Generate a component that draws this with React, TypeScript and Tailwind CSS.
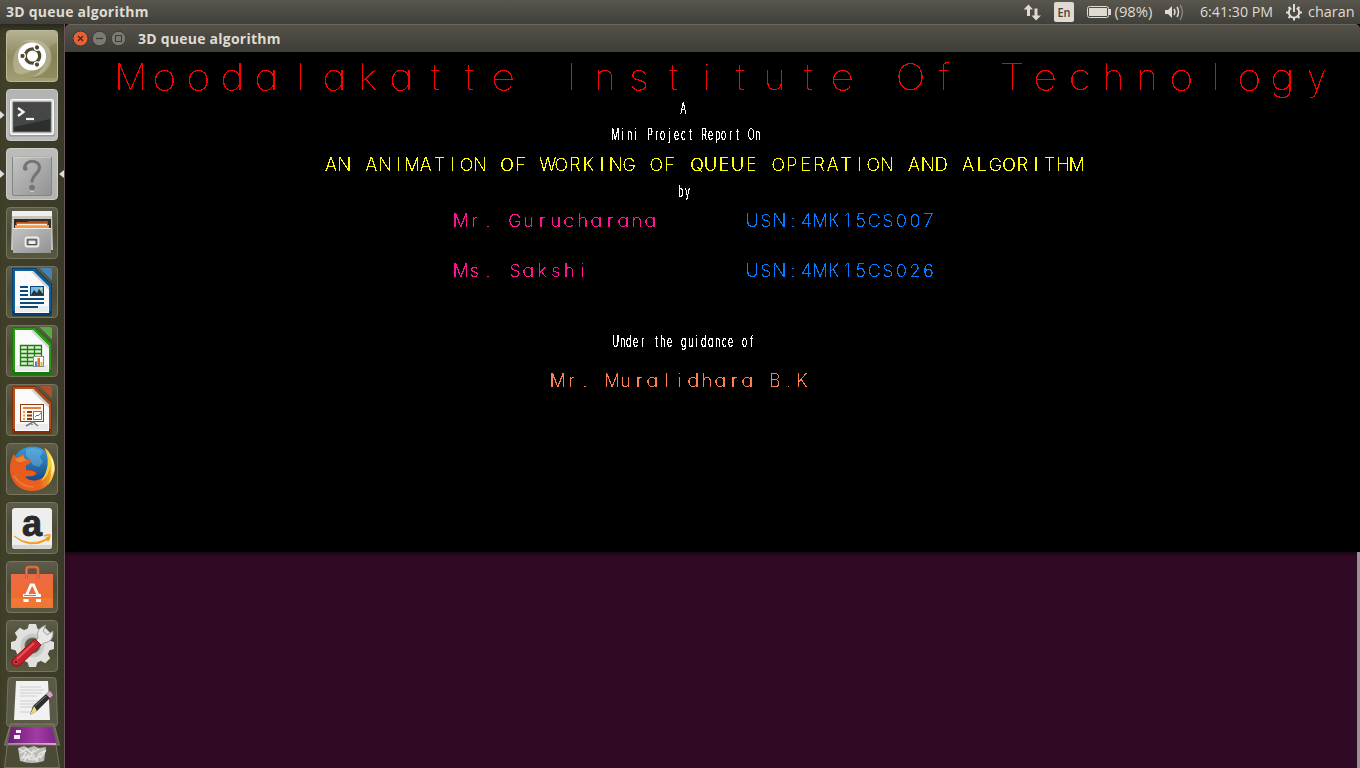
import type { ReactNode } from "react";

const UI = "font-['Open_Sans','Noto_Sans',sans-serif]";

/* Fixed-pitch line: every character sits centred in its own cell. */
function StrokeText({ text, variant, className = "" }: { text: string; variant: "title" | "normal" | "small"; className?: string }) {
  const row = {
    title: "text-[36px] font-thin [filter:url(#fine)]",
    normal: "text-[18px] font-extralight [filter:url(#crisp)]",
    small: "text-[16px] font-light [filter:url(#crisp)]",
  }[variant];
  const cell = { title: "w-[33.9px]", normal: "w-[13.575px]", small: "w-[6.79px]" }[variant];
  const glyph = (c: string) => {
    if (variant === "small") return "scale-x-[0.56]";
    if (/[acdego]/.test(c)) return "scale-x-[1.14]";
    if (variant === "title" && /[stkTO]/.test(c)) return "scale-x-[1.1]";
    return "";
  };
  return (
    <div
      className={`flex h-5 shrink-0 items-center whitespace-pre font-['Inter',sans-serif] leading-5 [font-feature-settings:'cv11','calt'_0] ${row} ${className}`}
    >
      {[...text].map((c, i) => (
        <span key={i} className={`flex shrink-0 justify-center ${cell}`}>
          <span className={`inline-block ${glyph(c)}`}>{c}</span>
        </span>
      ))}
    </div>
  );
}

function Tile({ children, bg = "from-[#5d5c49] via-[#4b4a37] to-[#59583f]", border = "border-[#77755f]" }: { children: ReactNode; bg?: string; border?: string }) {
  return (
    <div className={`mb-[7px] h-[52px] w-[52px] shrink-0 rounded-[4px] border bg-linear-to-b ${bg} ${border}`}>
      <svg viewBox="1 1 50 50" width="50" height="50">
        {children}
      </svg>
    </div>
  );
}

function Dash() {
  return (
    <Tile bg="from-[#b5b294] via-[#8f8a62] to-[#a39e72]" border="border-[#bcb99b]">
      <path d="M2 27C8 8 34 4 43 18C50 31 43 45 27 47C43 37 42 18 29 14C17 8 7 15 2 27Z" fill="#d3d0b6" opacity=".45" />
      <path d="M9 42C2 22 16 11 28 13C13 18 12 34 25 41C18 45 13 45 9 42Z" fill="#dad7bf" opacity=".4" />
      <path d="M20 48C36 48 50 35 43 17L51 12V48Z" fill="#736f42" opacity=".35" />
      <circle cx="26" cy="26.5" r="14" fill="#fff" />
      <circle cx="26.5" cy="26" r="7.2" fill="none" stroke="#504b30" strokeWidth="3.3" />
      <g fill="#504b30" stroke="#fff" strokeWidth="1.3">
        <circle cx="16.5" cy="26" r="2.8" />
        <circle cx="31" cy="17.5" r="2.8" />
        <circle cx="31" cy="34.6" r="2.8" />
      </g>
    </Tile>
  );
}

function Terminal() {
  return (
    <Tile bg="from-[#b3b3b2] to-[#bdbdbb]" border="border-[#cacac8]">
      <rect x="3.5" y="10.5" width="45" height="37" rx="1" fill="#9a9a99" />
      <rect x="4.5" y="10.5" width="43" height="35" rx="1" fill="#e4e4e2" stroke="#fafafa" />
      <rect x="7" y="13" width="38" height="30" fill="#2d2f2f" stroke="#777" />
      <path d="M8 14H44V30L8 38Z" fill="#555857" opacity=".6" />
      <path d="M12 19L17.5 23L12 27" fill="none" stroke="#f3f3ef" strokeWidth="2.3" />
      <path d="M20 30H28" stroke="#f3f3ef" strokeWidth="2.2" />
    </Tile>
  );
}

function Unknown() {
  return (
    <Tile bg="from-[#bcbcbb] to-[#b4b4b2]" border="border-[#cececb]">
      <rect x="6.5" y="8.5" width="39" height="39" rx="1.5" fill="url(#gray)" stroke="#858584" />
      <path d="M7 9H45" stroke="#ddd" />
      <path d="M18.500 21C18 11 33.500 11 33.500 19.500C33.500 26 26 26 26 34.500" fill="none" stroke="#747474" strokeWidth="3" />
      <circle cx="19.300" cy="20.500" r="2.300" fill="#747474" />
      <circle cx="26" cy="39.500" r="2.800" fill="#747474" />
      <path d="M24 43Q26 44.300 28 43" stroke="#cfcfcf" fill="none" />
    </Tile>
  );
}

function Files() {
  return (
    <Tile>
      <path d="M6 6H46L47 43H5Z" fill="#c5c5c3" />
      <path d="M6 4H46V9H6Z" fill="#f0f0ee" />
      <rect x="8" y="12" width="37" height="13" fill="#342b25" />
      <path d="M10 17V15H21L23 14H42V24H10Z" fill="#b84e1a" />
      <path d="M9 18H43V27H9Z" fill="#ef9b52" />
      <path d="M11 17.5H41" stroke="#fff0d5" strokeWidth="1.5" />
      <path d="M7 21H45V46H7Z" fill="url(#gray)" />
      <path d="M7 21.5H45" stroke="#ececea" />
      <rect x="19.5" y="30.5" width="13" height="9" rx="2" fill="#888" stroke="#ededeb" strokeWidth="1.8" />
      <rect x="22" y="33" width="8" height="4.5" fill="#eee" stroke="#4a4a4a" />
    </Tile>
  );
}

function DocBase({ dark, mid, light }: { dark: string; mid: string; light: string }) {
  return (
    <>
      <path d="M6 3Q6 2 7 2H29.500L46 18.500V48Q46 50 44 50H8Q6 50 6 48Z" fill={dark} />
      <path d="M7 3H29L45 19V45H7Z" fill={mid} />
      <path d="M33.500 2H44Q46 2 46 4V14.500Z" fill={light} />
      <path d="M9 5H27L43 21V47H9Z" fill="#fafafa" />
      <path d="M10 40H42V46H10Z" fill="#ececec" />
      <path d="M27 5L43 21V24L25 6Z" fill="#cfd3d6" />
    </>
  );
}

function Writer() {
  return (
    <Tile>
      <DocBase dark="#07406c" mid="#0d5f9b" light="#4285b5" />
      <path d="M14 21H22M14 25H22M14 29H22M14 33H38M14 37H38M14 41H32" stroke="#0a4b7b" strokeWidth="1.9" />
      <rect x="24.500" y="20.500" width="13" height="9" fill="#75b9e7" stroke="#0a4b7b" />
      <path d="M25 29L28 24L31 27L33 23L37 28V29Z" fill="#27363c" />
      <circle cx="35" cy="22.600" r="1.200" fill="#f8d44c" />
    </Tile>
  );
}

function Calc() {
  return (
    <Tile>
      <DocBase dark="#17780a" mid="#2a9715" light="#55ad42" />
      <rect x="14" y="20" width="22" height="21" fill="#d6f2cb" />
      <path d="M14.500 20.500H35.500V40.500H14.500ZM14 24.500H36M14 28.500H36M14 32.500H36M14 36.500H36M21.500 20V41M28.500 20V41" fill="none" stroke="#1d7d10" strokeWidth="1.300" />
      <rect x="27.500" y="31.500" width="10" height="10" fill="#fff" stroke="#888" />
      <path d="M29 36.500H31V41H29Z" fill="#3988ce" />
      <path d="M31.500 33H34V41H31.500Z" fill="#e36a1d" />
      <path d="M34.500 37H36.500V41H34.500Z" fill="#e8b629" />
    </Tile>
  );
}

function Impress() {
  return (
    <Tile>
      <DocBase dark="#812f0b" mid="#b1501e" light="#a9512c" />
      <rect x="14.500" y="20.500" width="23" height="17" fill="#fff8ed" stroke="#943b12" />
      <path d="M17 24H35" stroke="#dc7131" strokeWidth="1.800" />
      <path d="M17 28H19M17 31.500H19M17 35H19" stroke="#ee985b" strokeWidth="2" />
      <path d="M21 28H26M21 31.500H26M21 35H26" stroke="#8e3513" strokeWidth="2" />
      <rect x="27.500" y="27.500" width="8" height="8" fill="#fff" stroke="#777" />
      <path d="M29 33L31 31L32 32L35 29" stroke="#31a143" fill="none" />
      <path d="M25 38H27L32 42M27 38L20 42M26 38V41" fill="none" stroke="#777" strokeWidth="1.500" />
    </Tile>
  );
}

function Firefox() {
  return (
    <Tile>
      <circle cx="26.500" cy="24.500" r="21" fill="url(#sea)" />
      <path d="M20 6Q30 3 37 8L34 14L37 19L33 24L27 22L23 16L20 13Z" fill="#8ad0ee" opacity=".35" />
      <path d="M8 11L10 15L18 10.500C16.500 12.500 17 14.500 19 15.500L25 17.500C25 20 22 21 20 22.500L20 27C24 26 28 27 31 30C27 35 22 32 19 34C25 40 36 38 40 31C45 23 43 14 38 5C46 10 50 20 48.500 29C46 41 37 48 26 48C13 48 4 38 4 26C4 20 5 15 8 11Z" fill="url(#fire)" />
      <path d="M39 5C50 14 51 32 42 42C46 34 45 28 44 23C43 31 39 36 35 38C42 29 44 17 39 5Z" fill="#f6cf38" />
      <path d="M42 10Q48 20 45 33L48.500 27Q49 17 42 10Z" fill="#fdf3a2" />
      <path d="M9 15Q13 16 18 12Q17 15 21 17L16 19Q10 20 9 15Z" fill="#f9ae42" opacity=".5" />
      <path d="M20 27Q26 26 31 30" fill="none" stroke="#a63a15" strokeWidth=".8" />
      <path d="M8 33Q15 44 28 44" fill="none" stroke="#f58a3b" strokeWidth="1.500" opacity=".7" />
    </Tile>
  );
}

function Amazon() {
  return (
    <Tile>
      <rect x="6" y="6" width="40" height="41" rx="3" fill="#eeeeec" />
      <path d="M6 43H46V44Q46 47 43 47H9Q6 47 6 44Z" fill="#d5d5d3" />
      <text x="26" y="33.500" textAnchor="middle" className="font-['Liberation_Sans',sans-serif] text-[36px] font-bold" fill="#292929" stroke="#292929" strokeWidth=".9">a</text>
      <path d="M8 34Q24 46 41 36.500L40 35.500L44 34.500L42.500 39L41.700 37.500Q24 48 8 34Z" fill="#f59a16" stroke="#f59a16" strokeWidth=".8" />
      <path d="M38 34Q45 31.500 43.700 34Q43.500 37 41.500 39" fill="none" stroke="#f59a16" strokeWidth="1.500" />
    </Tile>
  );
}

function Software() {
  return (
    <Tile>
      <path d="M5 13H47V47H5Z" fill="url(#bag)" />
      <path d="M5 37H47V47H5Z" fill="#f48248" opacity=".5" />
      <path d="M20.500 18V8.500Q20.500 6 23 6H29.500Q32 6 32 8.500V18" fill="none" stroke="#c95732" strokeWidth="3" />
      <path d="M20.500 18V8.500Q20.500 6 23 6H29.500Q32 6 32 8.500V18" fill="none" stroke="#e77a54" strokeWidth="1.200" />
      <path d="M20.500 34L25 24H27.500L32 34M17 34.500H35M17.500 39.500H22.500M30 39.500H35" stroke="#fff" strokeWidth="2.800" fill="none" />
      <path d="M18 34.500H30" stroke="#ed6b2c" strokeWidth="1.200" />
    </Tile>
  );
}

function Settings() {
  return (
    <Tile>
      <g fill="#e1e1df">
        <circle cx="26.500" cy="25.500" r="17.500" />
        {[0, 45, 90, 135, 180, 225, 270, 315].map((a) => (
          <path key={a} d="M21.500 9L23 4H30L31.500 9Z" transform={`rotate(${a} 26.500 25.500)`} />
        ))}
      </g>
      <circle cx="26.500" cy="25.500" r="12" fill="#c9c9c7" />
      <circle cx="26.500" cy="25.500" r="8" fill="#5a594a" stroke="#a8a8a5" />
      <path d="M29 22L32 18Q29 9 40 5L37 11L41 15L47 11Q48 22 38 23L34 26Z" fill="#e8e8e7" stroke="#91918e" strokeWidth=".8" />
      <path d="M29 19L35 25L14 45Q10 48 7 45Q4 42 8 38Z" fill="#c9202b" stroke="#88141c" />
      <path d="M28 23L11 39" stroke="#e5575b" strokeWidth="1.800" />
      <circle cx="10" cy="42" r="1.700" fill="#5b1115" stroke="#e65861" strokeWidth=".7" />
    </Tile>
  );
}

/* Stacked entries at the foot of the launcher. */
function FoldedStack() {
  return (
    <svg className="shrink-0 -mt-[2px] ml-[-2px]" width="56" height="92" viewBox="0 0 56 92">
      <path d="M6.500 .5H49.500Q52 .5 52 3L53.500 46Q53.500 49.500 50 49.500H6Q2.500 49.500 2.500 46L4 3Q4 .5 6.500 .5Z" fill="#5a5947" stroke="#77755f" />
      <path d="M12 4H44L46 43H10Z" fill="#f1f1f1" />
      <path d="M16 10H37M16 13H40M16 16H38M16 19H33M16 24H40M16 27H36M16 30H34M16 35H30" stroke="#cfcfce" />
      <path d="M29 29L42 17L47 20L33 34L26 38Z" fill="#2d2d2d" />
      <path d="M30 29L33 34L26 38Z" fill="#eed978" />
      <path d="M42 17L46 14L49 18L46 21Z" fill="#e4a0c4" stroke="#8c8c8c" strokeWidth=".8" />
      <path d="M31 29L42 19" stroke="#777" />
      <path d="M6.500 47H50L55.500 68H.5Z" fill="#656352" stroke="#807e68" />
      <path d="M7 50H48L52 66H4Z" fill="url(#purple)" />
      <path d="M4 66H52V68H4Z" fill="#d9a0d3" />
      <path d="M12 53H17V56H12ZM10 58H16V62H10Z" fill="#f3eaf3" />
      <path d="M3.500 66L.5 90.500H55.500L52 68" fill="#5c5a48" fillOpacity=".45" stroke="#757360" />
      <path d="M14 71L20 69L24 71L30 69L35 71L42 70L40 84Q28 88 16 84Z" fill="#bcbcb9" />
      <path d="M15 72L22 76L18 81L27 79L33 84L35 77L40 74M21 71L28 76L35 72M20 84L25 77M30 72L25 83M36 81L42 73M16 76L23 72L31 80M19 79L29 83L38 78" fill="none" stroke="#e6e6e3" strokeWidth="1.300" />
    </svg>
  );
}

function Defs() {
  return (
    <svg width="0" height="0" className="absolute">
      <defs>
        <filter id="crisp" x="-5%" y="-40%" width="110%" height="180%" colorInterpolationFilters="sRGB">
          <feComponentTransfer>
            <feFuncA type="discrete" tableValues="0 0 1 1 1 1" />
          </feComponentTransfer>
        </filter>
        <filter id="fine" x="-5%" y="-60%" width="110%" height="220%" colorInterpolationFilters="sRGB">
          <feComponentTransfer>
            <feFuncA type="discrete" tableValues="0 0 0 1 1 1 1 1 1 1" />
          </feComponentTransfer>
        </filter>
        <linearGradient id="gray" x2="1" y2="1"><stop stopColor="#c3c3c2" /><stop offset="1" stopColor="#929292" /></linearGradient>
        <linearGradient id="sea" x2="0" y2="1"><stop stopColor="#3a9ad7" /><stop offset="1" stopColor="#103771" /></linearGradient>
        <linearGradient id="fire" x2="1" y2="0"><stop stopColor="#e65b20" /><stop offset=".65" stopColor="#e9601d" /><stop offset="1" stopColor="#f3b02c" /></linearGradient>
        <linearGradient id="bag" x2="0" y2="1"><stop stopColor="#ed6b45" /><stop offset="1" stopColor="#ef6b22" /></linearGradient>
        <linearGradient id="purple" x2="1"><stop stopColor="#6b1c74" /><stop offset=".6" stopColor="#a33ba4" /><stop offset="1" stopColor="#7e2488" /></linearGradient>
      </defs>
    </svg>
  );
}

function TopBar() {
  return (
    <header className={`flex h-6 shrink-0 items-center bg-linear-to-b from-[#59564d] to-[#403f3a] text-[14px] text-[#dfdbd2] ${UI}`}>
      <div className="w-[200px] whitespace-nowrap pl-[6px] text-[14px] leading-6 font-bold tracking-[0.24px]">3D queue algorithm</div>
      <div className="flex-1" />
      <svg width="336" height="24" viewBox="1024 0 336 24" className="shrink-0" fill="#dfdbd2">
        <path d="M1028.500 4.500L1033 9.500H1030V16H1027V9.500H1023.500ZM1036 20.500L1031.500 15.500H1034.500V8.500H1037.500V15.500H1041Z" />
        <rect x="1054" y="2" width="20" height="20" rx="2" />
        <text x="1064" y="17" textAnchor="middle" fill="#45433d" className="text-[13px] font-semibold" textLength="13" lengthAdjust="spacingAndGlyphs">En</text>
        <rect x="1087.500" y="6.500" width="21" height="11" rx="2" fill="none" stroke="#dfdbd2" />
        <rect x="1089" y="8" width="18" height="8" rx=".5" />
        <rect x="1109" y="9" width="2" height="6" />
        <text x="1114.500" y="17" textLength="38" lengthAdjust="spacingAndGlyphs">(98%)</text>
        <path d="M1165 10H1168L1172 6V18L1168 14H1165Z" />
        <path d="M1174 9Q1176 12 1174 15M1177 7Q1180 12 1177 17" fill="none" stroke="#dfdbd2" strokeWidth="1.500" />
        <path d="M1180 5Q1185 12 1180 20" fill="none" stroke="#858279" strokeWidth="1.500" />
        <text x="1200" y="17" textLength="73" lengthAdjust="spacingAndGlyphs">6:41:30 PM</text>
        <path d="M1291 8A5.300 5.300 0 1 0 1297 8" fill="none" stroke="#dfdbd2" strokeWidth="2" />
        <path d="M1294 4V12M1286 12.500H1290M1298 12.500H1302M1288.500 7L1291 9.500M1299.500 7L1297 9.500M1288.500 18L1291 15.500M1299.500 18L1297 15.500M1294 17V20.500" stroke="#dfdbd2" strokeWidth="2" />
        <text x="1308" y="17" textLength="46.500" lengthAdjust="spacingAndGlyphs">charan</text>
      </svg>
    </header>
  );
}

function TitleBar() {
  return (
    <div className={`flex h-7 shrink-0 items-center rounded-t-[5px] border-t border-[#69665b] bg-linear-to-b from-[#565249] to-[#3e3d38] pl-2 ${UI}`}>
      <svg width="54" height="20" viewBox="73 29 54 20" fill="none">
        <circle cx="80.500" cy="38.500" r="7.500" fill="#eb6032" stroke="#393731" />
        <path d="M78 36L83 41M83 36L78 41" stroke="#4c251a" strokeWidth="1.300" />
        <circle cx="99.500" cy="38.500" r="7.300" fill="#7b7972" stroke="#3a3934" />
        <path d="M96 38.500H103" stroke="#3b3a35" strokeWidth="1.200" />
        <circle cx="118.500" cy="38.500" r="7.300" fill="#7b7972" stroke="#3a3934" />
        <rect x="115.500" y="35.500" width="6" height="6" stroke="#3b3a35" />
      </svg>
      <span className="ml-[11px] whitespace-nowrap text-[14px] font-bold tracking-[0.24px] text-[#dfdbd2]">3D queue algorithm</span>
    </div>
  );
}

function Arrow({ left = false }: { left?: boolean }) {
  return (
    <svg width="5" height="8" viewBox="0 0 5 8" className="shrink-0">
      <path d={left ? "M5 0V8L0 4Z" : "M0 0V8L4.500 4Z"} fill="#dedede" />
    </svg>
  );
}

export default function App() {
  return (
    <div className="flex h-[768px] w-[1360px] flex-col overflow-hidden bg-black">
      <Defs />
      <TopBar />
      <div className="flex min-h-0 flex-1">
        <aside className="flex w-[65px] shrink-0 overflow-hidden border-r border-[#69575a] bg-linear-to-r from-[#414029] to-[#3c3b29] shadow-[inset_0_7px_7px_-4px_#24231b]">
          <div className="flex w-[6px] shrink-0 flex-col gap-[51px] pt-[87px]"><Arrow /><Arrow /></div>
          <nav className="flex w-[53px] shrink-0 flex-col pt-[6px]">
            <Dash />
            <Terminal />
            <Unknown />
            <Files />
            <Writer />
            <Calc />
            <Impress />
            <Firefox />
            <Amazon />
            <Software />
            <Settings />
            <FoldedStack />
          </nav>
          <div className="pt-[146px]"><Arrow left /></div>
        </aside>
        <main className="flex min-w-0 flex-1 flex-col bg-[#300a24]">
          <div className="shrink-0 bg-black"><TitleBar /></div>
          <section className="flex h-[500px] shrink-0 flex-col bg-black">
            <StrokeText variant="title" text="Moodalakatte Institute Of Technology" className="mt-[15px] ml-[48.700px] text-[#ff0000]" />
            <StrokeText variant="small" text="A" className="mt-[11px] ml-[615px] text-white" />
            <StrokeText variant="small" text="Mini Project Report On" className="mt-[6px] ml-[547.300px] text-white" />
            <StrokeText variant="normal" text="AN ANIMATION OF WORKING OF QUEUE OPERATION AND ALGORITHM" className="mt-[11px] ml-[259px] text-[#ffff00]" />
            <StrokeText variant="small" text="by" className="mt-[6px] ml-[612px] text-white" />
            <div className="mt-[10px] ml-[389px] flex">
              <StrokeText variant="normal" text="Mr. Gurucharana" className="w-[291.500px] text-[#ff1493]" />
              <StrokeText variant="normal" text="USN:4MK15CS007" className="text-[#007fff]" />
            </div>
            <div className="mt-[30px] ml-[389px] flex">
              <StrokeText variant="normal" text="Ms. Sakshi" className="w-[291.500px] text-[#ff1493]" />
              <StrokeText variant="normal" text="USN:4MK15CS026" className="text-[#007fff]" />
            </div>
            <StrokeText variant="small" text="Under the guidance of" className="mt-[50px] ml-[547.300px] text-white" />
            <StrokeText variant="normal" text="Mr. Muralidhara B.K" className="mt-[20px] ml-[486px] text-[#ff7f50]" />
          </section>
          <div className="flex flex-1 justify-end shadow-[inset_0_4px_4px_-2px_#18040f]">
            <div className="w-[3px] bg-[#9b9095]" />
          </div>
        </main>
      </div>
    </div>
  );
}
